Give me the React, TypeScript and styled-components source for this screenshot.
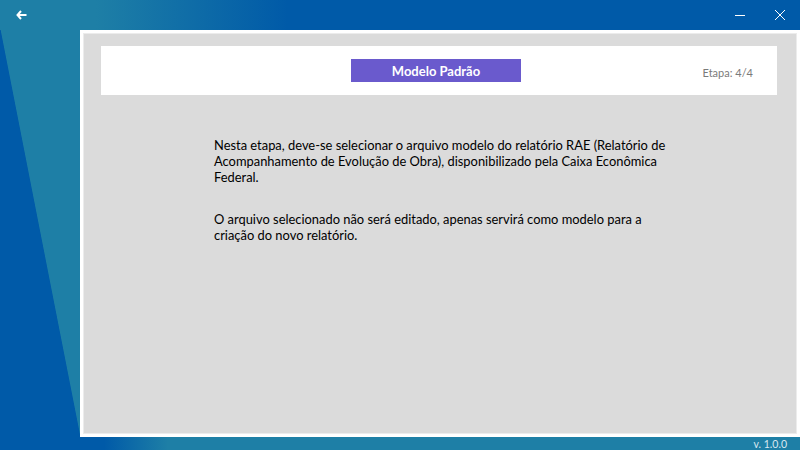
import styled, { createGlobalStyle } from "styled-components";

const GlobalStyle = createGlobalStyle`
  html, body {
    margin: 0;
    padding: 0;
    width: 800px;
    height: 450px;
    overflow: hidden;
  }
  #root {
    width: 800px;
    height: 450px;
  }
`;

const Root = styled.div`
  width: 800px;
  height: 450px;
  display: flex;
  flex-direction: column;
  font-family: "Lato", "Noto Sans", sans-serif;
  background: #005aa8;
`;

const TitleBar = styled.div`
  height: 30px;
  display: flex;
  align-items: center;
  padding: 0 13px 0 14px;
  background: linear-gradient(to right, #1e7fa6 12%, #005aa8 36%);
`;

const IconButton = styled.button`
  width: 14px;
  height: 14px;
  padding: 0;
  border: none;
  background: transparent;
  display: flex;
  align-items: center;
  justify-content: center;
  cursor: pointer;
`;

const Spacer = styled.div`
  flex: 1;
`;

const WindowControls = styled.div`
  display: flex;
  align-items: center;
  gap: 26px;
`;

const Stage = styled.div`
  flex: 1;
  display: flex;
  padding-left: 80px;
  background: linear-gradient(78.9deg, #005aa8 9.1%, #1e7fa6 9.2%);
`;

const Panel = styled.div`
  flex: 1;
  display: flex;
  background: #ffffff;
  padding: 3px;
`;

const Inner = styled.div`
  flex: 1;
  display: flex;
  flex-direction: column;
  background: #dbdbdb;
  border: 1px solid #ececec;
  padding: 12px 19px 0 17px;
`;

const HeaderCard = styled.div`
  height: 49px;
  background: #ffffff;
  display: grid;
  grid-template-columns: 1fr auto 1fr;
  align-items: center;
`;

const StepTitle = styled.div`
  grid-column: 2;
  width: 170px;
  height: 23px;
  margin-right: 6px;
  background: #6a5acd;
  color: #ffffff;
  font-weight: 700;
  font-size: 13px;
  display: flex;
  align-items: center;
  justify-content: center;
`;

const StepCount = styled.div`
  grid-column: 3;
  justify-self: end;
  margin: 3px 24px 0 0;
  font-size: 11px;
  color: #7a7a7a;
`;

const Description = styled.div`
  margin: 42px 0 0 113px;
  width: 470px;
  color: #000000;
  font-size: 12.9px;
  line-height: 16.2px;
`;

const Paragraph = styled.p`
  margin: 0 0 25px 0;
`;

const StatusBar = styled.div`
  height: 13px;
  display: flex;
  align-items: center;
  justify-content: flex-end;
  padding-right: 13px;
  background: linear-gradient(to right, #005aa8 13%, #1e7fa6 21%);
`;

const Version = styled.span`
  font-size: 10.5px;
  color: #d9e8f0;
  margin-top: 1px;
`;

const App = () => {
  return (
    <Root>
      <GlobalStyle />
      <TitleBar>
        <IconButton aria-label="Voltar">
          <svg width="11" height="10" viewBox="0 0 11 10">
            <path d="M5 1 L1.5 5 L5 9 M1.5 5 H10.5" stroke="#ffffff" strokeWidth="2" fill="none" />
          </svg>
        </IconButton>
        <Spacer />
        <WindowControls>
          <IconButton aria-label="Minimizar">
            <svg width="12" height="12" viewBox="0 0 12 12">
              <path d="M1 6.5 H11" stroke="#ffffff" strokeWidth="1" />
            </svg>
          </IconButton>
          <IconButton aria-label="Fechar">
            <svg width="12" height="12" viewBox="0 0 12 12">
              <path d="M1 1 L11 11 M11 1 L1 11" stroke="#ffffff" strokeWidth="1" />
            </svg>
          </IconButton>
        </WindowControls>
      </TitleBar>
      <Stage>
        <Panel>
          <Inner>
            <HeaderCard>
              <StepTitle>Modelo Padrão</StepTitle>
              <StepCount>Etapa: 4/4</StepCount>
            </HeaderCard>
            <Description>
              <Paragraph>
                Nesta etapa, deve-se selecionar o arquivo modelo do relatório RAE (Relatório de
                <br />
                Acompanhamento de Evolução de Obra), disponibilizado pela Caixa Econômica
                <br />
                Federal.
              </Paragraph>
              <Paragraph>
                O arquivo selecionado não será editado, apenas servirá como modelo para a
                <br />
                criação do novo relatório.
              </Paragraph>
            </Description>
          </Inner>
        </Panel>
      </Stage>
      <StatusBar>
        <Version>v. 1.0.0</Version>
      </StatusBar>
    </Root>
  );
};

export default App;
